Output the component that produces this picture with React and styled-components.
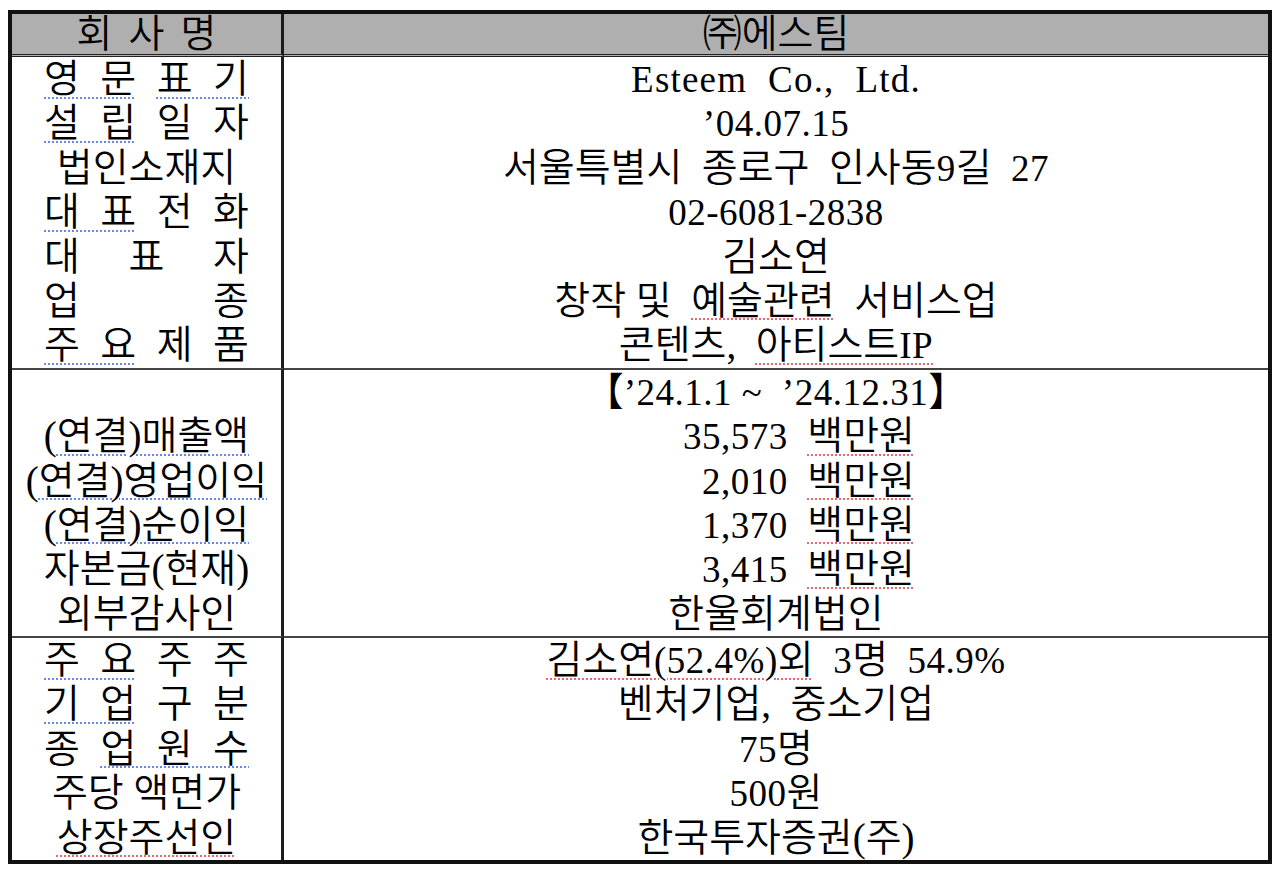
import React from 'react'
import styled, { createGlobalStyle } from 'styled-components'

const GlobalStyle = createGlobalStyle`
  html, body {
    margin: 0;
    background: #fff;
  }
  body {
    font-family: "Liberation Serif", "Noto Sans CJK KR", serif;
    color: #000;
  }
`

const ROW = 44.4

const Page = styled.div`
  padding: 10px 8px 0;
`

const Sheet = styled.div`
  width: 1264px;
  box-sizing: border-box;
  border: 4px solid #111;
  display: grid;
  grid-template-columns: 272px 1fr;
  font-size: 39px;
  font-weight: 350;
`

const HeadCell = styled.div`
  background: #afafaf;
  height: 40px;
  line-height: 40px;
  border-bottom: 3px double #222;
  border-right: ${p => (p.$left ? '3px solid #1c1c1c' : 'none')};
  text-align: center;
  white-space: pre;
`

const Cell = styled.div`
  display: flex;
  flex-direction: column;
  border-top: ${p => (p.$first ? 'none' : '2px solid #444')};
  border-right: ${p => (p.$left ? '3px solid #1c1c1c' : 'none')};
`

const Line = styled.div`
  height: ${ROW}px;
  line-height: ${ROW}px;
  text-align: center;
  white-space: pre;
`

const Spread = styled.div`
  width: ${p => p.$w}px;
  margin: 0 auto;
  height: ${ROW}px;
  line-height: ${ROW}px;
  text-align: justify;
  text-align-last: justify;
`

const HeadSpread = styled(Spread)`
  height: 40px;
  line-height: 40px;
`

const AmountLine = styled(Line)`
  width: 278px;
  margin: 0 auto;
  text-align: right;
`

// latin runs: the reference sets them in a slightly smaller serif
const L = styled.span`
  font-size: 37px;
  font-weight: 400;
  letter-spacing: ${p => (p.$wide ? '1.2px' : '0.5px')};
`

const Sq = styled.span`
  text-decoration: underline dotted ${p => (p.$red ? '#e46a6a' : '#6688e8')};
  text-decoration-thickness: 1.5px;
  text-underline-offset: 5px;
`

const amounts = ['35,573', '2,010', '1,370', '3,415']

export default function App() {
  return (
    <Page>
      <GlobalStyle />
      <Sheet>
        <HeadCell $left>
          <HeadSpread $w={140}>회 사 명</HeadSpread>
        </HeadCell>
        <HeadCell>㈜에스팀</HeadCell>

        <Cell $left $first>
          <Spread $w={205}><Sq>영 문</Sq> <Sq>표 기</Sq></Spread>
          <Spread $w={205}><Sq>설 립</Sq> 일 자</Spread>
          <Line>법인소재지</Line>
          <Spread $w={205}><Sq>대 표</Sq> 전 화</Spread>
          <Spread $w={205}>대 표 자</Spread>
          <Spread $w={205}>업 종</Spread>
          <Spread $w={205}><Sq>주 요</Sq> 제 품</Spread>
        </Cell>
        <Cell $first>
          <Line><L $wide>Esteem  Co.,  Ltd.</L></Line>
          <Line><L>’04.07.15</L></Line>
          <Line>서울특별시  종로구  인사동<L>9</L>길  <L>27</L></Line>
          <Line><L>02-6081-2838</L></Line>
          <Line>김소연</Line>
          <Line>창작 및  <Sq $red>예술관련</Sq>  서비스업</Line>
          <Line>콘텐츠,  <Sq $red>아티스트<L>IP</L></Sq></Line>
        </Cell>

        <Cell $left>
          <Line> </Line>
          <Line>(<Sq>연결)매출액</Sq></Line>
          <Line>(<Sq>연결)영업이익</Sq></Line>
          <Line>(<Sq>연결)순이익</Sq></Line>
          <Line>자본금(현재)</Line>
          <Line>외부감사인</Line>
        </Cell>
        <Cell>
          <Line>【<L>’24.1.1 ~  ’24.12.31</L>】</Line>
          {amounts.map(a => (
            <AmountLine key={a}><L>{a}  </L><Sq $red>백만원</Sq></AmountLine>
          ))}
          <Line>한울회계법인</Line>
        </Cell>

        <Cell $left>
          <Spread $w={205}><Sq>주 요</Sq> 주 주</Spread>
          <Spread $w={205}><Sq>기 업</Sq> 구 분</Spread>
          <Spread $w={205}>종 <Sq>업 원 수</Sq></Spread>
          <Line>주당 액면가</Line>
          <Line><Sq $red>상장주선인</Sq></Line>
        </Cell>
        <Cell>
          <Line><Sq $red>김소연<L>(52.4%)</L>외</Sq>  <L>3</L>명  <L>54.9%</L></Line>
          <Line>벤처기업,  중소기업</Line>
          <Line><L>75</L>명</Line>
          <Line><L>500</L>원</Line>
          <Line>한국투자증권(주)</Line>
        </Cell>
      </Sheet>
    </Page>
  )
}
